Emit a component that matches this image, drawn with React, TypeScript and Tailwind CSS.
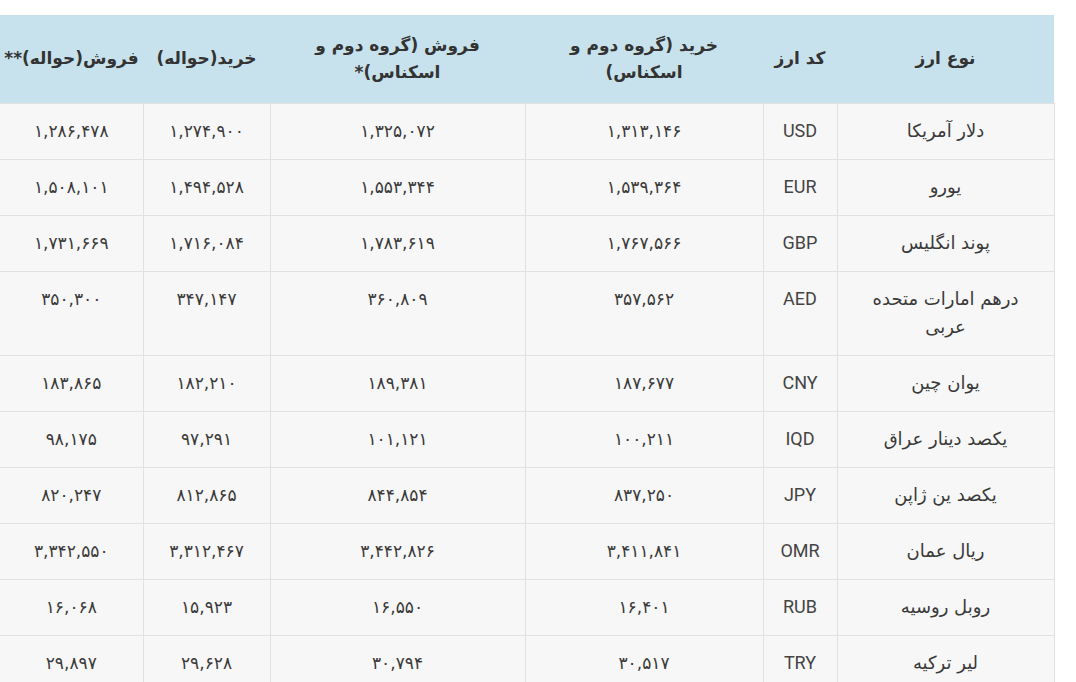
import React from "react";

const rows: string[][] = [
  ["دلار آمریکا", "USD", "۱,۳۱۳,۱۴۶", "۱,۳۲۵,۰۷۲", "۱,۲۷۴,۹۰۰", "۱,۲۸۶,۴۷۸"],
  ["یورو", "EUR", "۱,۵۳۹,۳۶۴", "۱,۵۵۳,۳۴۴", "۱,۴۹۴,۵۲۸", "۱,۵۰۸,۱۰۱"],
  ["پوند انگلیس", "GBP", "۱,۷۶۷,۵۶۶", "۱,۷۸۳,۶۱۹", "۱,۷۱۶,۰۸۴", "۱,۷۳۱,۶۶۹"],
  ["درهم امارات متحده\nعربی", "AED", "۳۵۷,۵۶۲", "۳۶۰,۸۰۹", "۳۴۷,۱۴۷", "۳۵۰,۳۰۰"],
  ["یوان چین", "CNY", "۱۸۷,۶۷۷", "۱۸۹,۳۸۱", "۱۸۲,۲۱۰", "۱۸۳,۸۶۵"],
  ["یکصد دینار عراق", "IQD", "۱۰۰,۲۱۱", "۱۰۱,۱۲۱", "۹۷,۲۹۱", "۹۸,۱۷۵"],
  ["یکصد ین ژاپن", "JPY", "۸۳۷,۲۵۰", "۸۴۴,۸۵۴", "۸۱۲,۸۶۵", "۸۲۰,۲۴۷"],
  ["ریال عمان", "OMR", "۳,۴۱۱,۸۴۱", "۳,۴۴۲,۸۲۶", "۳,۳۱۲,۴۶۷", "۳,۳۴۲,۵۵۰"],
  ["روبل روسیه", "RUB", "۱۶,۴۰۱", "۱۶,۵۵۰", "۱۵,۹۲۳", "۱۶,۰۶۸"],
  ["لیر ترکیه", "TRY", "۳۰,۵۱۷", "۳۰,۷۹۴", "۲۹,۶۲۸", "۲۹,۸۹۷"],
];

const fa = { fontFamily: "'DejaVu Sans', Roboto, sans-serif" };
const latin = { fontFamily: "Roboto, 'Liberation Sans', sans-serif" };

export default function App() {
  return (
    <div className="h-[682px] w-[1076px] overflow-hidden bg-white pt-[15px]">
      <table
        dir="rtl"
        className="ml-0 w-[1054px] table-fixed border-collapse text-[#3a3a3a]"
        style={fa}
      >
        <colgroup>
          <col className="w-[217px]" />
          <col className="w-[74px]" />
          <col className="w-[238px]" />
          <col className="w-[255px]" />
          <col className="w-[127px]" />
          <col className="w-[143px]" />
        </colgroup>
        <thead>
          <tr className="h-[88px] bg-[#c7e2ec] text-[17px] font-semibold leading-[27px] text-[#333] shadow-[0_2px_2px_rgba(0,0,0,0.05)]">
            <th className="px-2 text-center align-middle">نوع ارز</th>
            <th className="px-2 text-center align-middle">کد ارز</th>
            <th className="px-2 text-center align-middle">
              خرید (گروه دوم و<br />اسکناس)
            </th>
            <th className="px-2 text-center align-middle">
              فروش (گروه دوم و<br />اسکناس)*
            </th>
            <th className="px-1 text-center align-middle whitespace-nowrap">خرید(حواله)</th>
            <th className="px-0 text-center align-middle whitespace-nowrap">فروش(حواله)**</th>
          </tr>
        </thead>
        <tbody>
          {rows.map((r) => (
            <tr key={r[1]} className="bg-[#f7f7f7]">
              <td className="border border-[#e1e1e1] px-3 pt-[13px] pb-[14px] text-center align-top text-[18px] leading-[28px] whitespace-pre-line">
                {r[0]}
              </td>
              <td
                className="border border-[#e1e1e1] px-1 pt-[13px] pb-[14px] text-center align-top text-[18px] leading-[28px] text-[#444]"
                style={latin}
              >
                {r[1]}
              </td>
              {r.slice(2).map((v, i) => (
                <td
                  key={i}
                  className="border border-[#e1e1e1] px-1 pt-[13px] pb-[14px] text-center align-top text-[17px] leading-[28px] last:border-l-0"
                >
                  {v}
                </td>
              ))}
            </tr>
          ))}
        </tbody>
      </table>
    </div>
  );
}
